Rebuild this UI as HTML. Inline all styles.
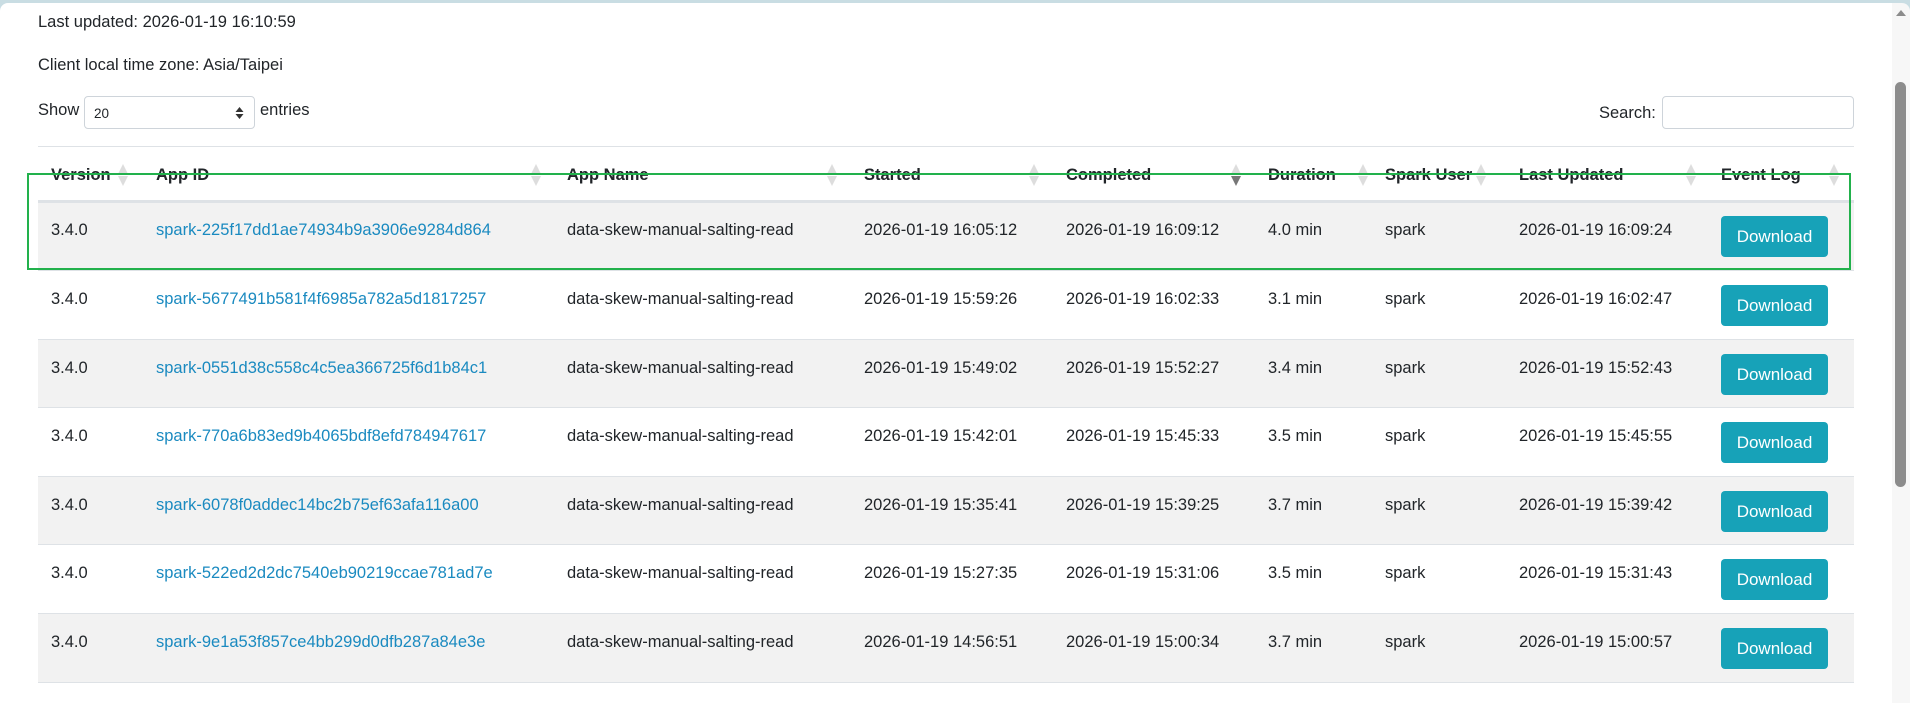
<!DOCTYPE html>
<html><head><meta charset="utf-8"><style>
*{box-sizing:border-box;margin:0;padding:0}
body{width:1910px;height:688px;overflow:hidden;background:#c9dde3;font-family:"Liberation Sans",sans-serif;font-size:16.5px;color:#212529;position:relative}
.page{position:absolute;left:0;top:3px;width:1892px;height:700px;background:#fff;border-top-left-radius:8px}
.sb{position:absolute;left:1892px;top:3px;width:18px;height:700px;background:#f7f7f7;border-top-right-radius:8px}
.thumb{position:absolute;left:1895px;top:82px;width:11px;height:405px;background:#8c8c8c;border-radius:6px}
.up{position:absolute;left:1896px;top:10px;width:0;height:0;border-left:5px solid transparent;border-right:5px solid transparent;border-bottom:6px solid #8c8c8c}
.a{position:absolute;white-space:nowrap}
.sel{position:absolute;left:84px;top:96px;width:171px;height:33px;border:1px solid #ced4da;border-radius:4px;font-size:13.5px;padding:9px 0 0 9px}
.inp{position:absolute;left:1662px;top:96px;width:192px;height:33px;border:1px solid #ced4da;border-radius:4px}
.row{position:absolute;left:38px;width:1816px;border-bottom:1px solid #dee2e6}
.th{font-weight:bold;top:166px}
.arr{position:absolute;width:10px;height:22px;top:164px}
.btn{position:absolute;left:1721px;width:107px;height:41px;background:#17a2b8;color:#fff;border-radius:4px;font-size:17px;text-align:center;line-height:41px}
a{color:#1a8ac0;text-decoration:none}
</style></head><body>
<div class="page"></div>
<div class="sb"></div><div class="up"></div><div class="thumb"></div>
<div class="a" style="left:38px;top:13px">Last updated: 2026-01-19 16:10:59</div>
<div class="a" style="left:38px;top:56px">Client local time zone: Asia/Taipei</div>
<div class="a" style="left:38px;top:101px">Show</div>
<div class="sel">20<svg style="position:absolute;right:10px;top:9px" width="9" height="14"><path d="M0.5 6L4.5 1L8.5 6Z M0.5 8L4.5 13L8.5 8Z" fill="#333"/></svg></div>
<div class="a" style="left:260px;top:101px">entries</div>
<div class="a" style="left:1599px;top:104px">Search:</div>
<div class="inp"></div>
<div style="position:absolute;left:38px;top:146px;width:1816px;height:1px;background:#dee2e6"></div>
<div class="row" style="top:200px;height:3px;background:#dee2e6;border:0"></div>
<div class="a th" style="left:51px">Version</div>
<div class="a th" style="left:156px">App ID</div>
<div class="a th" style="left:567px">App Name</div>
<div class="a th" style="left:864px">Started</div>
<div class="a th" style="left:1066px">Completed</div>
<div class="a th" style="left:1268px">Duration</div>
<div class="a th" style="left:1385px">Spark User</div>
<div class="a th" style="left:1519px">Last Updated</div>
<div class="a th" style="left:1721px">Event Log</div>
<svg class="arr" style="left:118px"><path d="M5 0L10 10L0 10Z M5 22L10 12L0 12Z" fill="#ddd"/></svg>
<svg class="arr" style="left:531px"><path d="M5 0L10 10L0 10Z M5 22L10 12L0 12Z" fill="#ddd"/></svg>
<svg class="arr" style="left:827px"><path d="M5 0L10 10L0 10Z M5 22L10 12L0 12Z" fill="#ddd"/></svg>
<svg class="arr" style="left:1029px"><path d="M5 0L10 10L0 10Z M5 22L10 12L0 12Z" fill="#ddd"/></svg>
<svg class="arr" style="left:1231px"><path d="M5 0L10 10L0 10Z" fill="#ddd"/><path d="M5 22L10 12L0 12Z" fill="#777"/></svg>
<svg class="arr" style="left:1358px"><path d="M5 0L10 10L0 10Z M5 22L10 12L0 12Z" fill="#ddd"/></svg>
<svg class="arr" style="left:1476px"><path d="M5 0L10 10L0 10Z M5 22L10 12L0 12Z" fill="#ddd"/></svg>
<svg class="arr" style="left:1686px"><path d="M5 0L10 10L0 10Z M5 22L10 12L0 12Z" fill="#ddd"/></svg>
<svg class="arr" style="left:1829px"><path d="M5 0L10 10L0 10Z M5 22L10 12L0 12Z" fill="#ddd"/></svg>

<div class="row" style="top:203px;height:68px;background:#f2f2f2"></div>
<div class="row" style="top:271px;height:69px"></div>
<div class="row" style="top:340px;height:68px;background:#f2f2f2"></div>
<div class="row" style="top:408px;height:69px"></div>
<div class="row" style="top:477px;height:68px;background:#f2f2f2"></div>
<div class="row" style="top:545px;height:69px"></div>
<div class="row" style="top:614px;height:69px;background:#f2f2f2"></div>

<div class="a" style="left:51px;top:221px">3.4.0</div><div class="a" style="left:156px;top:221px"><a>spark-225f17dd1ae74934b9a3906e9284d864</a></div><div class="a" style="left:567px;top:221px">data-skew-manual-salting-read</div><div class="a" style="left:864px;top:221px">2026-01-19 16:05:12</div><div class="a" style="left:1066px;top:221px">2026-01-19 16:09:12</div><div class="a" style="left:1268px;top:221px">4.0 min</div><div class="a" style="left:1385px;top:221px">spark</div><div class="a" style="left:1519px;top:221px">2026-01-19 16:09:24</div><div class="btn" style="top:216px">Download</div>
<div class="a" style="left:51px;top:290px">3.4.0</div><div class="a" style="left:156px;top:290px"><a>spark-5677491b581f4f6985a782a5d1817257</a></div><div class="a" style="left:567px;top:290px">data-skew-manual-salting-read</div><div class="a" style="left:864px;top:290px">2026-01-19 15:59:26</div><div class="a" style="left:1066px;top:290px">2026-01-19 16:02:33</div><div class="a" style="left:1268px;top:290px">3.1 min</div><div class="a" style="left:1385px;top:290px">spark</div><div class="a" style="left:1519px;top:290px">2026-01-19 16:02:47</div><div class="btn" style="top:285px">Download</div>
<div class="a" style="left:51px;top:359px">3.4.0</div><div class="a" style="left:156px;top:359px"><a>spark-0551d38c558c4c5ea366725f6d1b84c1</a></div><div class="a" style="left:567px;top:359px">data-skew-manual-salting-read</div><div class="a" style="left:864px;top:359px">2026-01-19 15:49:02</div><div class="a" style="left:1066px;top:359px">2026-01-19 15:52:27</div><div class="a" style="left:1268px;top:359px">3.4 min</div><div class="a" style="left:1385px;top:359px">spark</div><div class="a" style="left:1519px;top:359px">2026-01-19 15:52:43</div><div class="btn" style="top:354px">Download</div>
<div class="a" style="left:51px;top:427px">3.4.0</div><div class="a" style="left:156px;top:427px"><a>spark-770a6b83ed9b4065bdf8efd784947617</a></div><div class="a" style="left:567px;top:427px">data-skew-manual-salting-read</div><div class="a" style="left:864px;top:427px">2026-01-19 15:42:01</div><div class="a" style="left:1066px;top:427px">2026-01-19 15:45:33</div><div class="a" style="left:1268px;top:427px">3.5 min</div><div class="a" style="left:1385px;top:427px">spark</div><div class="a" style="left:1519px;top:427px">2026-01-19 15:45:55</div><div class="btn" style="top:422px">Download</div>
<div class="a" style="left:51px;top:496px">3.4.0</div><div class="a" style="left:156px;top:496px"><a>spark-6078f0addec14bc2b75ef63afa116a00</a></div><div class="a" style="left:567px;top:496px">data-skew-manual-salting-read</div><div class="a" style="left:864px;top:496px">2026-01-19 15:35:41</div><div class="a" style="left:1066px;top:496px">2026-01-19 15:39:25</div><div class="a" style="left:1268px;top:496px">3.7 min</div><div class="a" style="left:1385px;top:496px">spark</div><div class="a" style="left:1519px;top:496px">2026-01-19 15:39:42</div><div class="btn" style="top:491px">Download</div>
<div class="a" style="left:51px;top:564px">3.4.0</div><div class="a" style="left:156px;top:564px"><a>spark-522ed2d2dc7540eb90219ccae781ad7e</a></div><div class="a" style="left:567px;top:564px">data-skew-manual-salting-read</div><div class="a" style="left:864px;top:564px">2026-01-19 15:27:35</div><div class="a" style="left:1066px;top:564px">2026-01-19 15:31:06</div><div class="a" style="left:1268px;top:564px">3.5 min</div><div class="a" style="left:1385px;top:564px">spark</div><div class="a" style="left:1519px;top:564px">2026-01-19 15:31:43</div><div class="btn" style="top:559px">Download</div>
<div class="a" style="left:51px;top:633px">3.4.0</div><div class="a" style="left:156px;top:633px"><a>spark-9e1a53f857ce4bb299d0dfb287a84e3e</a></div><div class="a" style="left:567px;top:633px">data-skew-manual-salting-read</div><div class="a" style="left:864px;top:633px">2026-01-19 14:56:51</div><div class="a" style="left:1066px;top:633px">2026-01-19 15:00:34</div><div class="a" style="left:1268px;top:633px">3.7 min</div><div class="a" style="left:1385px;top:633px">spark</div><div class="a" style="left:1519px;top:633px">2026-01-19 15:00:57</div><div class="btn" style="top:628px">Download</div>

<div style="position:absolute;left:27px;top:173px;width:1824px;height:97px;border:2.5px solid #22b14c"></div>
</body></html>
